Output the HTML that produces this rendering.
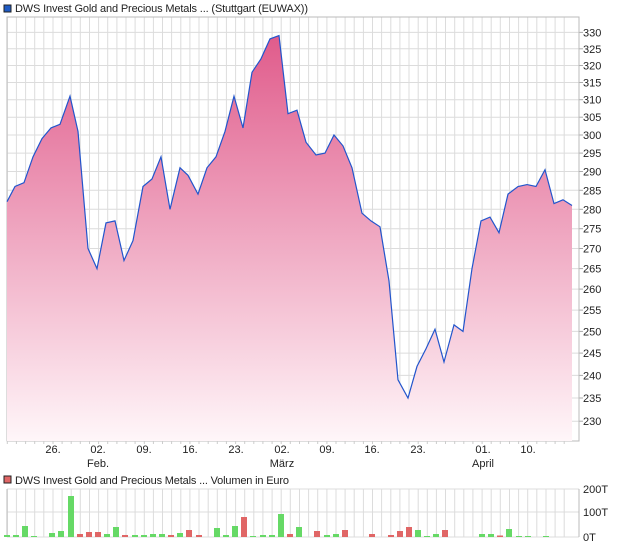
<!DOCTYPE html>
<html><head><meta charset="utf-8"><style>
body{margin:0;background:#fff;width:620px;height:546px;overflow:hidden;font-family:"Liberation Sans",sans-serif;}
svg text{font-family:"Liberation Sans",sans-serif;font-size:11px;fill:#222;}
</style></head><body>
<svg id="s" width="620" height="546" xmlns="http://www.w3.org/2000/svg">
<defs><linearGradient id="g" x1="0" y1="35" x2="0" y2="441" gradientUnits="userSpaceOnUse">
<stop offset="0" stop-color="#e05b8b"/><stop offset="1" stop-color="#fff6f9"/></linearGradient></defs>
<rect x="4" y="5" width="7" height="7" fill="#1f5bc4" stroke="#222" stroke-width="1"/>
<text x="15" y="12" textLength="293">DWS Invest Gold and Precious Metals ... (Stuttgart (EUWAX))</text>
<rect x="4" y="476" width="7" height="7" fill="#e06666" stroke="#222" stroke-width="1"/>
<text x="15" y="484" textLength="274">DWS Invest Gold and Precious Metals ... Volumen in Euro</text>
<g id="grid"></g>
<g id="plot"></g>
</svg>
<script>
var s=document.getElementById('grid'),p=document.getElementById('plot'),h='';
function Y(v){return 6278-1077*Math.log(v);}
for(var k=0;k<62;k++){var x=(7.3+9.13*k).toFixed(1);h+='<line x1="'+x+'" y1="17" x2="'+x+'" y2="441" stroke="#dcdcdc"/>';h+='<line x1="'+x+'" y1="489" x2="'+x+'" y2="537" stroke="#dcdcdc"/>';}
for(var v=230;v<=330;v+=5){var y=Y(v).toFixed(1);h+='<line x1="7" y1="'+y+'" x2="579" y2="'+y+'" stroke="#dcdcdc"/><line x1="579" y1="'+y+'" x2="583" y2="'+y+'" stroke="#aaa"/><text x="583" y="'+(Y(v)+4).toFixed(1)+'">'+v+'</text>';}
[489,512,537].forEach(function(y,i){h+='<line x1="7" y1="'+y+'" x2="579" y2="'+y+'" stroke="#dcdcdc"/><text x="583" y="'+(y+4)+'">'+['200T','100T','0T'][i]+'</text>';});
h+='<rect x="7" y="17" width="572" height="424" fill="none" stroke="#bbb"/>';
h+='<line x1="7" y1="489" x2="7" y2="537" stroke="#bbb"/><line x1="579" y1="489" x2="579" y2="537" stroke="#bbb"/>';
for(var k=0;k<62;k++){var x=(7.3+9.13*k).toFixed(1);h+='<line x1="'+x+'" y1="441" x2="'+x+'" y2="444" stroke="#ccc"/>';}
var xl=[[53,'26.'],[98,'02.'],[144,'09.'],[190,'16.'],[236,'23.'],[282,'02.'],[327,'09.'],[372,'16.'],[418,'23.'],[483,'01.'],[528,'10.']];
xl.forEach(function(a){h+='<text x="'+a[0]+'" y="453" text-anchor="middle">'+a[1]+'</text>';});
h+='<text x="98" y="467" text-anchor="middle">Feb.</text><text x="282" y="467" text-anchor="middle">März</text><text x="483" y="467" text-anchor="middle">April</text>';
s.innerHTML=h;
var d=[[7,282],[15,286],[24,287],[33,294],[42,299],[51,302],[60,303],[70,311],[78,301],[88,270],[97,265],[106,276.5],[115,277],[124,267],[133,272],[143,286],[152,288],[161,294],[170,280],[180,291],[188,289],[198,284],[207,291],[216,294],[225,301],[234,311],[243,302],[252,318],[261,322],[270,328],[279,329],[288,306],[297,307],[306,298],[316,294.5],[325,295],[334,300],[343,297],[352,291],[362,279],[371,277],[380,275.5],[389,262],[398,239],[408,235],[417,242],[426,246],[435,250.5],[444,243],[454,251.5],[463,250],[472,265],[481,277],[490,278],[499,274],[508,284],[518,286],[527,286.5],[536,286],[545,290.5],[554,281.5],[563,282.5],[572,281]];
var pts=d.map(function(a){return a[0]+','+Y(a[1]).toFixed(1)}).join(' ');
var q='<polygon points="7,441 '+pts+' 572,441" fill="url(#g)"/><polyline points="'+pts+'" fill="none" stroke="#2255cc" stroke-width="1.2"/>';
var b=[[7,'g',2],[16,'g',2],[25,'g',11],[34,'g',1],[52,'g',4],[61,'g',6],[71,'g',41],[80,'r',3],[89,'r',5],[98,'r',5],[107,'g',3],[116,'g',10],[125,'r',2],[135,'g',2],[144,'g',2],[153,'g',3],[162,'g',3],[171,'r',2],[180,'g',4],[189,'r',7],[199,'r',2],[217,'g',9],[226,'g',2],[235,'g',11],[244,'r',20],[253,'g',1],[263,'g',2],[272,'g',2],[281,'g',23],[290,'r',3],[299,'g',10],[317,'r',6],[327,'g',2],[336,'g',3],[345,'r',7],[372,'r',3],[391,'r',2],[400,'r',6],[409,'r',10],[418,'g',7],[427,'g',1],[436,'g',3],[445,'r',7],[482,'g',3],[491,'g',3],[500,'r',1.5],[509,'g',8],[519,'g',1],[528,'g',1],[546,'g',1]];
b.forEach(function(a){q+='<rect x="'+(a[0]-3)+'" y="'+(537-a[2])+'" width="6" height="'+a[2]+'" fill="'+(a[1]=='g'?'#66d966':'#e06666')+'"/>';});
p.innerHTML=q;
</script>
</body></html>
